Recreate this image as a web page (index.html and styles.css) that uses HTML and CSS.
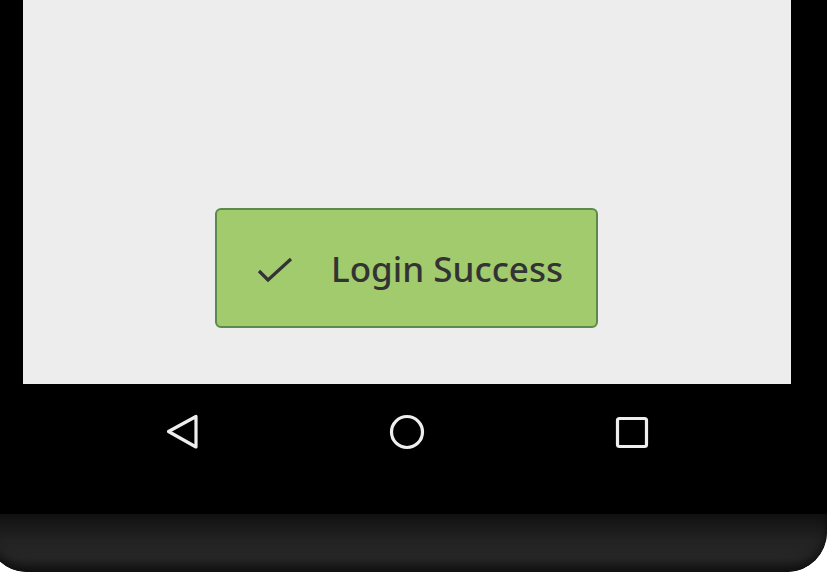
FILE: index.html
```html
<!DOCTYPE html>
<html>
<head>
<meta charset="utf-8">
<link rel="stylesheet" href="styles.css">
</head>
<body>
<div class="phone">
  <div class="screen">
    <div class="toast">
      <svg class="toast-icon" width="40" height="36" viewBox="0 0 40 36">
        <polyline points="4,20 13,29 36,8" fill="none" stroke="#333" stroke-width="3.2" stroke-linecap="butt" stroke-linejoin="miter"/>
      </svg>
      <span class="toast-text">Login Success</span>
    </div>
  </div>
  <div class="navbar">
    <svg class="nav-icon" width="36" height="36" viewBox="0 0 36 36">
      <polygon points="4.5,17.5 32,2.5 32,33" fill="none" stroke="#eee" stroke-width="3.2" stroke-linejoin="round"/>
    </svg>
    <svg class="nav-icon" width="36" height="36" viewBox="0 0 36 36">
      <circle cx="18" cy="18" r="15.5" fill="none" stroke="#eee" stroke-width="3.2"/>
    </svg>
    <svg class="nav-icon" width="36" height="36" viewBox="0 0 36 36">
      <rect x="3.5" y="4.5" width="29" height="28" rx="2" fill="none" stroke="#eee" stroke-width="3.2"/>
    </svg>
  </div>
  <div class="chin"></div>
</div>
</body>
</html>
```
FILE: styles.css
```css
html, body {
  margin: 0;
  padding: 0;
  background: #fff;
  overflow: hidden;
}
.phone {
  width: 840px;
  margin-left: -13px;
  background: #000;
  border-radius: 0 0 40px 40px;
  overflow: hidden;
  display: flex;
  flex-direction: column;
}
.screen {
  margin: 0 36px;
  width: 768px;
  height: 384px;
  background: #ededed;
  display: flex;
  flex-direction: column;
  align-items: center;
  justify-content: flex-end;
  padding-bottom: 56px;
  box-sizing: border-box;
}
.toast {
  box-sizing: border-box;
  width: 383px;
  height: 120px;
  margin-right: 1px;
  background: #a2cb6e;
  border: 2px solid #5c8a4a;
  border-radius: 6px;
  display: flex;
  align-items: center;
  padding-left: 38px;
  gap: 36px;
}
.toast-icon {
  display: block;
  flex: none;
  margin-top: 2px;
}
.toast-text {
  font-family: "Noto Sans", "Open Sans", sans-serif;
  font-size: 35px;
  font-weight: 500;
  color: #333;
  line-height: 1;
}
.navbar {
  height: 130px;
  margin: 0 36px;
  width: 768px;
  display: grid;
  grid-template-columns: repeat(3, 225px);
  justify-content: center;
  justify-items: center;
  align-items: start;
  padding-top: 30px;
  box-sizing: border-box;
}
.nav-icon {
  display: block;
}
.chin {
  height: 58px;
  background: linear-gradient(#111 0%, #222 45%, #262626 75%, #1e1e1e 100%);
  box-shadow: inset 0 -6px 10px rgba(0,0,0,0.5);
  border-radius: 0 0 40px 40px;
}
```
